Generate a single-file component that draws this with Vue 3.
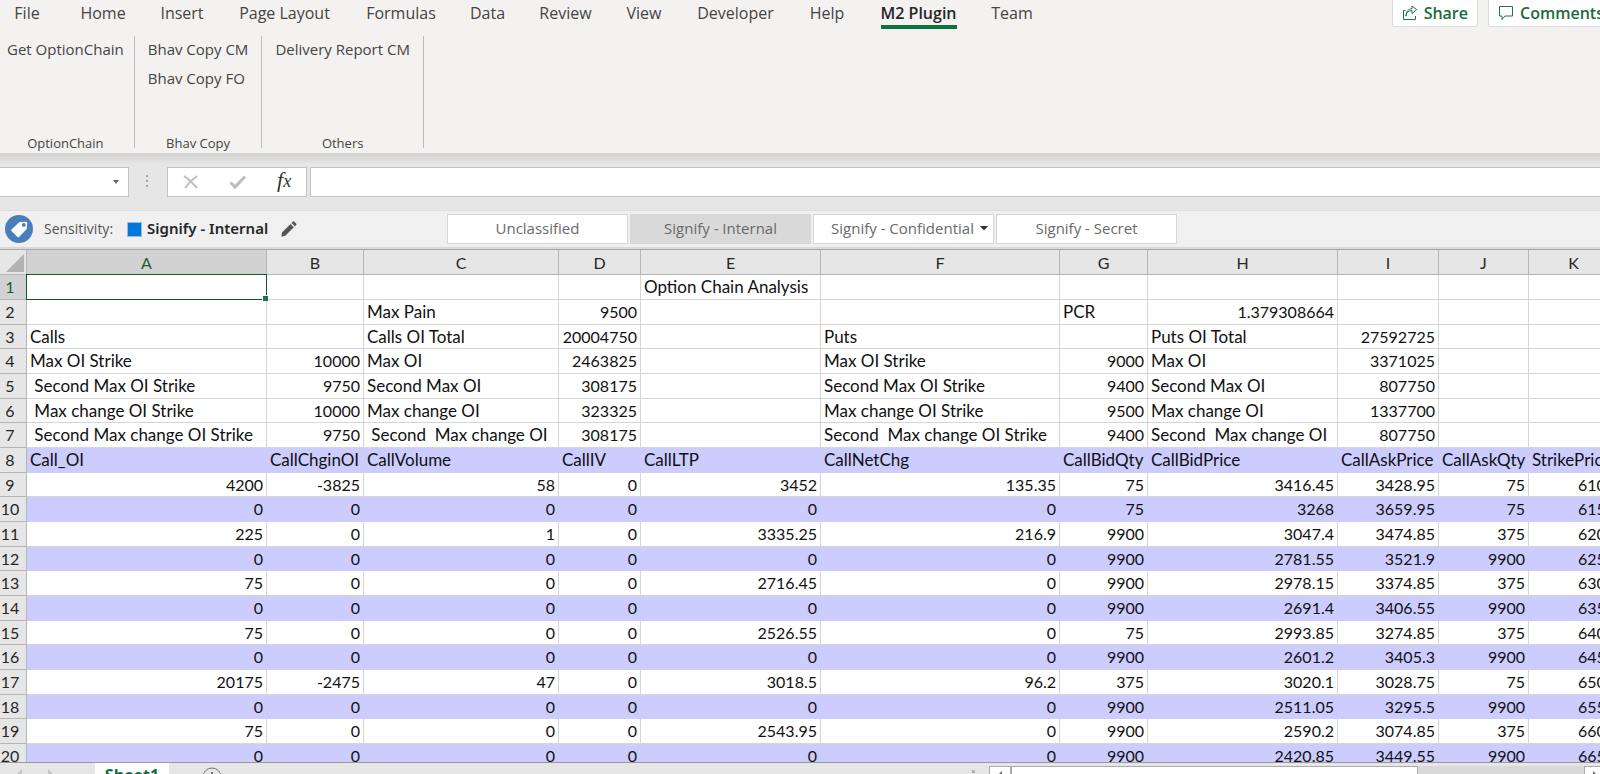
<script setup>
import { ref } from 'vue'

const tabs = [
  { name: 'File', width: 54 },
  { name: 'Home', width: 98 },
  { name: 'Insert', width: 60 },
  { name: 'Page Layout', width: 145 },
  { name: 'Formulas', width: 88 },
  { name: 'Data', width: 85 },
  { name: 'Review', width: 71 },
  { name: 'View', width: 86 },
  { name: 'Developer', width: 97 },
  { name: 'Help', width: 86 },
  { name: 'M2 Plugin', width: 97 },
  { name: 'Team', width: 90 },
]
const activeTab = ref('M2 Plugin')

const groups = [
  { label: 'OptionChain', commands: ['Get OptionChain'] },
  { label: 'Bhav Copy', commands: ['Bhav Copy CM', 'Bhav Copy FO'] },
  { label: 'Others', commands: ['Delivery Report CM'] },
]

const labels = [
  { name: 'Unclassified' },
  { name: 'Signify - Internal', active: true },
  { name: 'Signify - Confidential', menu: true },
  { name: 'Signify - Secret' },
]

const cellName = ref('')
const formula = ref('')

const columns = [
  { id: 'A', width: 240 },
  { id: 'B', width: 97 },
  { id: 'C', width: 195 },
  { id: 'D', width: 82 },
  { id: 'E', width: 180 },
  { id: 'F', width: 239 },
  { id: 'G', width: 88 },
  { id: 'H', width: 190 },
  { id: 'I', width: 101 },
  { id: 'J', width: 90 },
  { id: 'K', width: 90 },
]

const rows = [
  ['', '', '', '', 'Option Chain Analysis', '', '', '', '', '', ''],
  ['', '', 'Max Pain', 9500, '', '', 'PCR', 1.379308664, '', '', ''],
  ['Calls', '', 'Calls OI Total', 20004750, '', 'Puts', '', 'Puts OI Total', 27592725, '', ''],
  ['Max OI Strike', 10000, 'Max OI', 2463825, '', 'Max OI Strike', 9000, 'Max OI', 3371025, '', ''],
  [' Second Max OI Strike', 9750, 'Second Max OI', 308175, '', 'Second Max OI Strike', 9400, 'Second Max OI', 807750, '', ''],
  [' Max change OI Strike', 10000, 'Max change OI', 323325, '', 'Max change OI Strike', 9500, 'Max change OI', 1337700, '', ''],
  [' Second Max change OI Strike', 9750, ' Second  Max change OI', 308175, '', 'Second  Max change OI Strike', 9400, 'Second  Max change OI', 807750, '', ''],
  ['Call_OI', 'CallChginOI', 'CallVolume', 'CallIV', 'CallLTP', 'CallNetChg', 'CallBidQty', 'CallBidPrice', 'CallAskPrice', 'CallAskQty', 'StrikePrice'],
  [4200, -3825, 58, 0, 3452, 135.35, 75, 3416.45, 3428.95, 75, 6100],
  [0, 0, 0, 0, 0, 0, 75, 3268, 3659.95, 75, 6150],
  [225, 0, 1, 0, 3335.25, 216.9, 9900, 3047.4, 3474.85, 375, 6200],
  [0, 0, 0, 0, 0, 0, 9900, 2781.55, 3521.9, 9900, 6250],
  [75, 0, 0, 0, 2716.45, 0, 9900, 2978.15, 3374.85, 375, 6300],
  [0, 0, 0, 0, 0, 0, 9900, 2691.4, 3406.55, 9900, 6350],
  [75, 0, 0, 0, 2526.55, 0, 75, 2993.85, 3274.85, 375, 6400],
  [0, 0, 0, 0, 0, 0, 9900, 2601.2, 3405.3, 9900, 6450],
  [20175, -2475, 47, 0, 3018.5, 96.2, 375, 3020.1, 3028.75, 75, 6500],
  [0, 0, 0, 0, 0, 0, 9900, 2511.05, 3295.5, 9900, 6550],
  [75, 0, 0, 0, 2543.95, 0, 9900, 2590.2, 3074.85, 375, 6600],
  [0, 0, 0, 0, 0, 0, 9900, 2420.85, 3449.55, 9900, 6650],
]

const isBanded = (index) => index >= 7 && index % 2 === 1
const isNumber = (value) => typeof value === 'number'
</script>

<template>
  <div class="app">
    <header class="ribbon">
      <div class="tab-row">
        <nav class="tabs">
          <button
            v-for="tab in tabs"
            :key="tab.name"
            class="tab"
            :class="{ active: tab.name === activeTab }"
            :style="{ width: tab.width + 'px' }"
            @click="activeTab = tab.name"
          ><span>{{ tab.name }}</span></button>
        </nav>
        <div class="actions">
          <button class="action">
            <svg width="16" height="16" viewBox="0 0 16 16" fill="none" stroke="#217346" stroke-width="1">
              <path d="M3.500 5.500h-2v9h12V11" />
              <path d="M4 11c.3-3.800 2.500-5.500 6-5.500V8.500L14.700 4.600 10 1v2.600C6.500 3.800 4 6.500 4 11z" />
            </svg>
            Share
          </button>
          <button class="action comments">
            <svg width="16" height="16" viewBox="0 0 16 16" fill="none" stroke="#217346" stroke-width="1">
              <path d="M1.500 1.500h13v9.500H7l-3 3.500V11H1.500z" />
            </svg>
            Comments
          </button>
        </div>
      </div>
      <div class="groups">
        <section v-for="group in groups" :key="group.label" class="group">
          <div class="commands">
            <button v-for="command in group.commands" :key="command" class="command">{{ command }}</button>
          </div>
          <div class="group-label">{{ group.label }}</div>
        </section>
      </div>
    </header>

    <div class="formula-bar">
      <div class="name-box">
        <input v-model="cellName" type="text" aria-label="Name box" />
        <svg width="8" height="5" viewBox="0 0 8 5"><path d="M1 0h6L4 4z" fill="#666" /></svg>
      </div>
      <svg class="grip" width="4" height="14" viewBox="0 0 4 14" fill="#a6a6a6">
        <rect x="1" y="0" width="2" height="2" /><rect x="1" y="5" width="2" height="2" /><rect x="1" y="10" width="2" height="2" />
      </svg>
      <div class="formula-buttons">
        <button aria-label="Cancel">
          <svg width="16" height="16" viewBox="0 0 16 16" fill="none" stroke="#bdbdbd" stroke-width="2"><path d="M1 2q6 4 13 12M14 2Q7 7 2 14" /></svg>
        </button>
        <button aria-label="Enter">
          <svg width="18" height="16" viewBox="0 0 18 16" fill="none" stroke="#bdbdbd" stroke-width="3"><path d="M1.500 8.500L6 13 16 2.500" /></svg>
        </button>
        <button class="fx" aria-label="Insert function"><i>f</i><i class="x">x</i></button>
      </div>
      <input v-model="formula" class="formula" type="text" aria-label="Formula" />
    </div>

    <div class="sensitivity">
      <svg class="badge" width="28" height="28" viewBox="0 0 28 28">
        <circle cx="14" cy="14" r="14" fill="#4a7ebb" />
        <path d="M6.500 14.500l8-7.500 7-.3q.7 0 .7.800l-.4 6.500-7.800 8q-.8.700-1.600 0l-5.900-5.900q-.8-.8 0-1.600z" fill="#fff" />
        <circle cx="18.800" cy="9.900" r="1.900" fill="#4a7ebb" />
      </svg>
      <span class="caption">Sensitivity:</span>
      <span class="swatch"></span>
      <strong>Signify - Internal</strong>
      <button class="edit" aria-label="Edit sensitivity">
        <svg width="16" height="16" viewBox="0 0 16 16" fill="#555"><path d="M1 11.500L9.500 3l3.300 3.300-8.500 8.500L.4 15.700zM10.500 2L12 .6q.6-.5 1.200 0l2.100 2.100q.5.600 0 1.200L13.800 5.300z" /></svg>
      </button>
      <div class="label-buttons">
        <button v-for="label in labels" :key="label.name" :class="{ active: label.active, menu: label.menu }">
          {{ label.name }}
          <svg v-if="label.menu" width="8" height="5" viewBox="0 0 8 5"><path d="M0 0h8L4 4.500z" fill="#333" /></svg>
        </button>
      </div>
    </div>

    <main class="sheet">
      <table>
        <colgroup>
          <col class="row-col" />
          <col v-for="column in columns" :key="column.id" :style="{ width: column.width + 'px' }" />
        </colgroup>
        <thead>
          <tr>
            <th class="corner"><svg width="18" height="18" viewBox="0 0 18 18"><path d="M18 0v18H0z" fill="#b3b3b3" /></svg></th>
            <th v-for="column in columns" :key="column.id" scope="col" :class="{ selected: column.id === 'A' }">{{ column.id }}</th>
          </tr>
        </thead>
        <tbody>
          <tr v-for="(row, index) in rows" :key="index" :class="{ banded: isBanded(index) }">
            <th scope="row" :class="{ selected: index === 0 }">{{ index + 1 }}</th>
            <td
              v-for="(value, position) in row"
              :key="position"
              :class="{ number: isNumber(value), cursor: index === 0 && position === 0 }"
            >{{ value }}</td>
          </tr>
        </tbody>
      </table>
    </main>

    <footer class="bottom">
      <div class="sheet-nav">
        <svg width="36" height="12" viewBox="0 0 36 12" fill="#c6c6c6"><path d="M5 6v10L0 11zM31 6v10l5-5z" /></svg>
      </div>
      <button class="sheet-tab">Sheet1</button>
      <button class="add" aria-label="New sheet">
        <svg width="20" height="20" viewBox="0 0 20 20" fill="none" stroke="#777" stroke-width="1"><circle cx="10" cy="10" r="9" /><path d="M10 5v10M5 10h10" stroke-width="2" /></svg>
      </button>
      <span class="splitter"></span>
      <div class="scrollbar">
        <button aria-label="Scroll left"><svg width="6" height="10" viewBox="0 0 6 10"><path d="M5 0v10L0 5z" fill="#666" /></svg></button>
        <div class="track"><div class="thumb"></div></div>
        <button aria-label="Scroll right"><svg width="6" height="10" viewBox="0 0 6 10"><path d="M1 0v10l5-5z" fill="#666" /></svg></button>
      </div>
    </footer>
  </div>
</template>

<style>
body {
  margin: 0;
  overflow: hidden;
}
</style>

<style scoped>
.app {
  display: flex;
  flex-direction: column;
  height: 100vh;
  overflow: hidden;
  background: #e6e6e6;
  color: #444;
  font: 15px/20px "Open Sans", "Noto Sans", sans-serif;
}
* {
  box-sizing: border-box;
}
button,
input {
  margin: 0;
  padding: 0;
  border: 0;
  background: none;
  color: inherit;
  font: inherit;
}
svg {
  display: block;
  flex: none;
}

.ribbon {
  flex: none;
  background: #f3f2f1;
  border-bottom: 1px solid #d4d4d4;
}
.tab-row {
  display: flex;
  justify-content: space-between;
  height: 36px;
}
.tabs {
  display: flex;
  flex: none;
  font-size: 16px;
}
.tab {
  display: flex;
  justify-content: center;
  align-items: flex-start;
  white-space: nowrap;
}
.tab span {
  padding-top: 2px;
  height: 29px;
  line-height: 22px;
}
.tab.active span {
  border-bottom: 4px solid #107040;
  color: #262626;
  font-weight: 600;
}
.actions {
  display: flex;
  flex: none;
  gap: 10px;
  margin-right: -20px;
}
.action {
  display: flex;
  align-items: center;
  gap: 6px;
  height: 27px;
  padding: 0 9px 1px;
  border: 1px solid #dcdcdc;
  border-top: 0;
  border-radius: 0 0 3px 3px;
  background: #fff;
  color: #1a6b3c;
  font-size: 16px;
  font-weight: 600;
}
.action.comments {
  width: 132px;
  padding-right: 0;
}
.groups {
  display: flex;
  height: 117px;
  padding-bottom: 5px;
}
.group {
  display: flex;
  flex-direction: column;
  justify-content: space-between;
  padding: 0 13px;
  border-right: 1px solid #bcbcbc;
}
.group:first-child {
  padding: 0 10px 0 7px;
}
.commands {
  display: flex;
  flex-direction: column;
  align-items: flex-start;
}
.command {
  height: 29px;
  padding-bottom: 3px;
  white-space: nowrap;
}
.group-label {
  margin-bottom: -4px;
  font-size: 13px;
  line-height: 18px;
  text-align: center;
}

.formula-bar {
  display: flex;
  flex: none;
  align-items: center;
  height: 56px;
  background: linear-gradient(#d2d2d2, #e6e6e6 10px);
}
.name-box {
  display: flex;
  align-items: center;
  width: 129px;
  height: 30px;
  padding-right: 8px;
  border: 1px solid #c3c3c3;
  border-left: 0;
  background: #fff;
}
.name-box input {
  flex: 1;
  min-width: 0;
}
.grip {
  margin: 0 18px 0 16px;
}
.formula-buttons {
  display: flex;
  align-items: center;
  gap: 30px;
  width: 140px;
  height: 30px;
  padding-left: 15px;
  border: 1px solid #c3c3c3;
  background: #fff;
}
.fx {
  padding-bottom: 3px;
  color: #333;
  font-family: "Liberation Serif", serif;
  font-size: 22px;
}
.fx .x {
  font-size: 18px;
}
.formula {
  flex: 1;
  height: 30px;
  margin-left: 3px;
  border: 1px solid #c3c3c3;
  border-right: 0;
  background: #fff;
}

.sensitivity {
  display: flex;
  flex: none;
  align-items: center;
  height: 39px;
  padding-left: 5px;
  border-top: 1px solid #dedede;
  border-bottom: 2px solid #d9d9d9;
  background: #f0f0f0;
}
.caption {
  width: 71px;
  margin-left: 11px;
  color: #555;
  font-size: 14px;
  white-space: nowrap;
}
.swatch {
  width: 15px;
  height: 15px;
  margin: 0 5px 0 12px;
  border: 1px solid #8fbfe8;
  background: #0078d7;
}
strong {
  width: 122px;
  padding-bottom: 2px;
  color: #262626;
  font-family: "Noto Sans", "Open Sans", sans-serif;
  font-weight: 600;
  white-space: nowrap;
}
.edit {
  margin-left: 12px;
}
.label-buttons {
  display: flex;
  gap: 2px;
  margin-left: 150px;
}
.label-buttons button {
  display: flex;
  align-items: center;
  justify-content: center;
  gap: 6px;
  width: 181px;
  height: 30px;
  padding-bottom: 2px;
  border: 1px solid #d6d6d6;
  background: #fff;
  color: #6a6a6a;
  white-space: nowrap;
}
.label-buttons button.active {
  background: #d9d9d9;
}
.label-buttons button.menu {
  padding-left: 12px;
}

.sheet {
  flex: 1;
  min-height: 0;
  overflow: hidden;
  border-top: 1px solid #a8a8a8;
  background: #fff;
}
table {
  width: 1619px;
  border-spacing: 0;
  table-layout: fixed;
  color: #111;
  font: 17px/24px Lato, Carlito, sans-serif;
}
.row-col {
  width: 27px;
}
th,
td {
  height: 25px;
  padding: 0 3px;
  border-right: 1px solid #d6d6d6;
  border-bottom: 1px solid #d6d6d6;
  text-align: left;
  white-space: pre;
}
th {
  padding: 0;
  border-color: #b6b6b6;
  background: #e6e6e6;
  color: #262626;
  font-size: 16px;
  font-weight: 400;
  text-align: center;
}
thead th {
  padding-top: 2px;
  line-height: 22px;
}
tbody th {
  padding-right: 6px;
}
tbody tr:nth-child(3n) > * {
  height: 24px;
  line-height: 23px;
}
th.selected {
  background: #d2d2d2;
  color: #215c3a;
}
.corner svg {
  margin-left: 6px;
}
.number {
  font-size: 16px;
  text-align: right;
}
.banded td {
  border-color: #ccf;
  background: #ccf;
}
.cursor {
  position: relative;
}
.cursor::before {
  content: "";
  position: absolute;
  inset: -1px;
  border: 1px solid #0f5c22;
}
.cursor::after {
  content: "";
  position: absolute;
  right: -2px;
  bottom: -2px;
  width: 5px;
  height: 5px;
  border: solid #fff;
  border-width: 1px 0 0 1px;
  box-sizing: content-box;
  background: #217346;
}

.bottom {
  display: flex;
  flex: none;
  align-items: flex-start;
  height: 12px;
  overflow: hidden;
  border-top: 1px solid #999;
  background: #e6e6e6;
}
.sheet-nav {
  width: 95px;
  padding-left: 17px;
}
.sheet-tab {
  width: 74px;
  height: 27px;
  margin-top: -1px;
  background: #fff;
  color: #107040;
  font-size: 16px;
  font-weight: 700;
  line-height: 25px;
}
.add {
  margin: 4px 0 0 33px;
}
.splitter {
  width: 3px;
  height: 3px;
  margin: 7px 14px 0 auto;
  background: #b3b3b3;
}
.scrollbar {
  display: flex;
  width: 617px;
  height: 20px;
  margin-top: 3px;
  margin-right: -6px;
}
.scrollbar button {
  display: grid;
  place-items: center;
  flex: none;
  width: 22px;
  border: 1px solid #ababab;
  background: #fff;
}
.track {
  flex: 1;
  background: #d9d9d9;
}
.thumb {
  width: 71%;
  height: 20px;
  border: 1px solid #ababab;
  background: #fff;
}
</style>
